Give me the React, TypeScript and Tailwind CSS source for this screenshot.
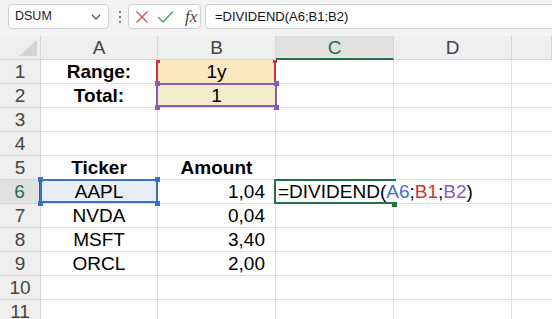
import React from "react";

type Row = {
  n: number;
  a?: string;
  b?: string;
  bold?: boolean;
  bAlign?: "center" | "right";
};

const rows: Row[] = [
  { n: 1, a: "Range:", b: "1y", bold: true, bAlign: "center" },
  { n: 2, a: "Total:", b: "1", bold: true, bAlign: "center" },
  { n: 3 },
  { n: 4 },
  { n: 5, a: "Ticker", b: "Amount", bold: true, bAlign: "center" },
  { n: 6, a: "AAPL", b: "1,04", bAlign: "right" },
  { n: 7, a: "NVDA", b: "0,04", bAlign: "right" },
  { n: 8, a: "MSFT", b: "3,40", bAlign: "right" },
  { n: 9, a: "ORCL", b: "2,00", bAlign: "right" },
  { n: 10 },
  { n: 11 },
];

const cols = ["A", "B", "C", "D", ""];

// small square handle on a range corner
function Handle({ className }: { className: string }) {
  return <div className={`absolute w-[5px] h-[5px] z-30 ${className}`} />;
}

function FormulaBar() {
  return (
    <div className="h-[36px] bg-[#f3f3f3] flex items-start pt-[4px] pl-[8px]">
      <div className="w-[101px] h-[25px] rounded-[4px] border border-[#d1d1d1] bg-white flex items-center pl-[6px] pr-[6px] justify-between">
        <span className="text-[12.5px] text-[#222]">DSUM</span>
        <svg width="10" height="6" viewBox="0 0 10 6" className="mr-[1px]">
          <path d="M1 1 L5 5 L9 1" fill="none" stroke="#444" strokeWidth="1.1" />
        </svg>
      </div>
      <div className="ml-[9px] w-[4px] h-[25px] flex flex-col items-center justify-center gap-[3px]">
        <span className="w-[2px] h-[2px] bg-[#555] rounded-full" />
        <span className="w-[2px] h-[2px] bg-[#555] rounded-full" />
        <span className="w-[2px] h-[2px] bg-[#555] rounded-full" />
      </div>
      <div className="ml-[6px] w-[73px] h-[25px] rounded-[4px] border border-[#d1d1d1] bg-white flex items-center pl-[6px] gap-[8px]">
        <svg width="14" height="14" viewBox="0 0 14 14">
          <path d="M1.5 1.5 L12.5 12.5 M12.5 1.5 L1.5 12.5" stroke="#e0484e" strokeWidth="1.3" />
        </svg>
        <svg width="17" height="13" viewBox="0 0 17 13">
          <path d="M1 7 L6 12 L16 1.5" fill="none" stroke="#3ba55c" strokeWidth="1.3" />
        </svg>
        <span className="font-['Liberation_Serif',serif] italic text-[17px] text-[#444] leading-none ml-[3px]">fx</span>
      </div>
      <div className="ml-[4px] flex-1 h-[25px] rounded-l-[4px] border border-r-0 border-[#d1d1d1] bg-white flex items-center pl-[9px]">
        <span className="text-[13px] text-[#111]">=DIVIDEND(A6;B1;B2)</span>
      </div>
    </div>
  );
}

export default function App() {
  return (
    <div className="w-[552px] h-[319px] overflow-hidden bg-white font-['Liberation_Sans',Arial,sans-serif]">
      <FormulaBar />
      <div className="grid grid-cols-[41px_117px_118px_118px_118px_1fr] bg-[#f3f3f3]">
        {/* corner */}
        <div className="h-[24px] bg-[#efefef] border-r border-b border-[#d6d6d6] relative">
          <svg width="18" height="16" viewBox="0 0 18 16" className="absolute right-[3px] bottom-[3px]">
            <path d="M18 0 L18 16 L0 16 Z" fill="#d4d4d4" />
          </svg>
        </div>
        {cols.map((c) =>
          c === "C" ? (
            <div
              key={c}
              className="h-[24px] bg-[#e1e1e1] border-r border-[#d6d6d6] border-b-2 border-b-[#217346] text-center text-[19px] leading-[24px] text-[#1e7145]"
            >
              {c}
            </div>
          ) : (
            <div
              key={c || "e"}
              className="h-[24px] bg-[#efefef] border-r border-b border-[#d6d6d6] text-center text-[19px] leading-[24px] text-[#444]"
            >
              {c}
            </div>
          )
        )}

        {rows.map((r) => (
          <React.Fragment key={r.n}>
            {r.n === 6 ? (
              <div className="h-[24px] bg-[#e1e1e1] border-r-2 border-r-[#217346] border-b border-[#d6d6d6] text-center text-[19px] leading-[23px] text-[#1e7145]">
                {r.n}
              </div>
            ) : (
              <div className="h-[24px] bg-[#efefef] border-r border-b border-[#d6d6d6] text-center text-[19px] leading-[23px] text-[#444]">
                {r.n}
              </div>
            )}

            {/* column A */}
            <div
              className={`h-[24px] border-r border-b border-[#e1e1e1] text-center text-[19px] leading-[23px] text-black relative ${
                r.n === 6 ? "bg-[#e8eef8]" : "bg-white"
              } ${r.bold ? "font-bold" : ""}`}
            >
              {r.a}
              {r.n === 6 && (
                <>
                  <div className="absolute -left-[1px] -top-[1px] right-[-1px] bottom-0 border-2 border-[#3a70c9] z-20" />
                  <Handle className="bg-[#3a70c9] -left-[3px] -top-[3px]" />
                  <Handle className="bg-[#3a70c9] -right-[3px] -top-[3px]" />
                  <Handle className="bg-[#3a70c9] -left-[3px] -bottom-[3px]" />
                  <Handle className="bg-[#3a70c9] -right-[3px] -bottom-[3px]" />
                </>
              )}
            </div>

            {/* column B */}
            <div
              className={`h-[24px] border-r border-b border-[#e1e1e1] text-[19px] leading-[23px] text-black relative ${
                r.bAlign === "right" ? "text-right pr-[10px]" : "text-center"
              } ${r.bold && r.n === 5 ? "font-bold" : ""} ${
                r.n === 1 ? "bg-[#fbe9c2]" : r.n === 2 ? "bg-[#f3edcb]" : "bg-white"
              }`}
            >
              {r.b}
              {r.n === 1 && (
                <>
                  <div className="absolute -left-[2px] top-0 bottom-0 w-[2px] bg-[#c8353f] z-20" />
                  <div className="absolute -right-[1px] top-0 bottom-0 w-[2px] bg-[#c8353f] z-20" />
                  <div className="absolute -left-[2px] top-0 w-[4px] h-[3px] bg-[#c8353f] z-20" />
                  <div className="absolute -right-[2px] top-0 w-[4px] h-[3px] bg-[#c8353f] z-20" />
                </>
              )}
              {r.n === 2 && (
                <>
                  <div className="absolute -left-[2px] -top-[1px] right-[-2px] bottom-0 border-2 border-[#8a5bbf] z-20" />
                  <Handle className="bg-[#8a5bbf] -left-[3px] -top-[3px]" />
                  <Handle className="bg-[#8a5bbf] -right-[4px] -top-[3px]" />
                  <Handle className="bg-[#8a5bbf] -left-[3px] -bottom-[3px]" />
                  <Handle className="bg-[#8a5bbf] -right-[4px] -bottom-[3px]" />
                </>
              )}
            </div>

            {/* column C */}
            {r.n === 6 ? (
              <div className="h-[24px] border-b border-[#e1e1e1] bg-white text-[19px] leading-[23px] text-black relative z-10 whitespace-nowrap pl-[2px]">
                <span>=DIVIDEND(</span>
                <span className="text-[#3a70c9]">A6</span>
                <span>;</span>
                <span className="text-[#c8353f]">B1</span>
                <span>;</span>
                <span className="text-[#8a5bbf]">B2</span>
                <span>)</span>
                <div className="absolute -left-[2px] -top-[1px] right-[-2px] bottom-[-1px] border-2 border-r-0 border-[#217346]" />
                <div className="absolute right-[-3px] -bottom-[4px] w-[5px] h-[5px] bg-[#217346]" />
              </div>
            ) : (
              <div className="h-[24px] border-r border-b border-[#e1e1e1] bg-white" />
            )}

            {/* column D and beyond */}
            <div className="h-[24px] border-r border-b border-[#e1e1e1] bg-white" />
            <div className="h-[24px] border-b border-[#e1e1e1] bg-white" />
          </React.Fragment>
        ))}
      </div>
    </div>
  );
}
